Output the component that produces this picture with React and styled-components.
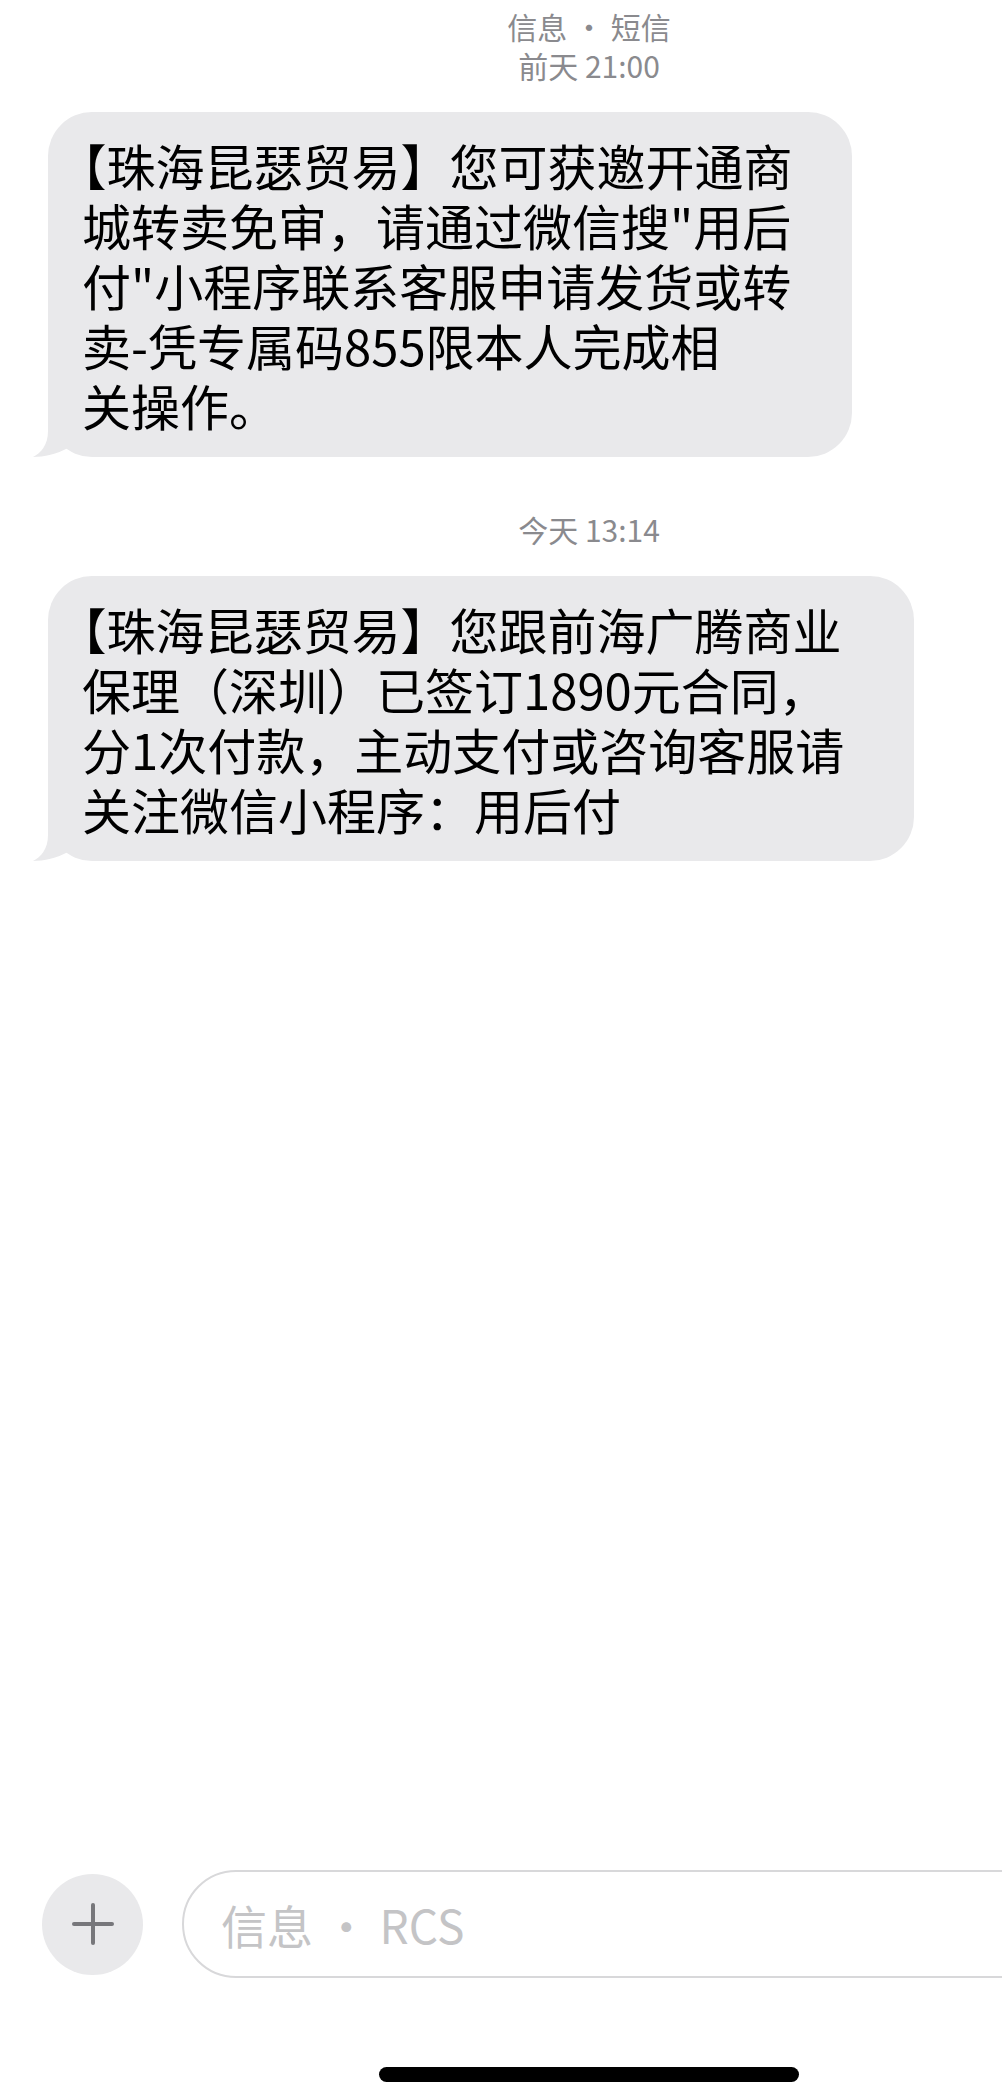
import React from 'react';
import styled, { createGlobalStyle } from 'styled-components';

const GlobalStyle = createGlobalStyle`
  html, body {
    margin: 0;
    padding: 0;
    background: #ffffff;
    overflow: hidden;
  }
  body {
    font-family: "Noto Sans CJK SC", "Noto Sans", sans-serif;
  }
`;

const Screen = styled.div`
  width: 1178px;
  height: 2099px;
  display: flex;
  flex-direction: column;
  background: #ffffff;
`;

const Thread = styled.div`
  flex: 1;
  display: flex;
  flex-direction: column;
  padding-top: 7px;
`;

const Stamp = styled.div`
  align-self: center;
  text-align: center;
  font-size: 30px;
  line-height: 39px;
  color: #8a8a8e;
  margin-top: ${(p) => p.$top || 0}px;
`;

const Bubble = styled.div`
  position: relative;
  isolation: isolate;
  align-self: flex-start;
  box-sizing: border-box;
  width: ${(p) => p.$width}px;
  margin: ${(p) => p.$top}px 0 0 48px;
  padding: 23px 0 22px 34px;
  background: #e9e9eb;
  border-radius: 44px;
  font-size: 49px;
  line-height: 60px;
  color: #000000;
  text-spacing-trim: trim-start;
`;

const Line = styled.span`
  display: block;
  white-space: nowrap;
`;

const Tail = styled.svg`
  position: absolute;
  z-index: -1;
  left: -16px;
  bottom: 0;
  width: 70px;
  height: 48px;
  display: block;
`;

const BubbleTail = () => (
  <Tail viewBox="0 0 70 48">
    <path
      d="M16 0 L16 22 C16 36 9 44 1 48 C12 48 25 45 36 39 C45 45 56 48 70 48 L70 0 Z"
      fill="#e9e9eb"
    />
  </Tail>
);

const Composer = styled.div`
  display: flex;
  align-items: center;
  gap: 39px;
  height: 108px;
  padding-left: 42px;
`;

const AddButton = styled.div`
  flex: none;
  width: 101px;
  height: 101px;
  border-radius: 50%;
  background: #e9e9eb;
  display: flex;
  align-items: center;
  justify-content: center;
`;

const Field = styled.div`
  flex: 1;
  box-sizing: border-box;
  height: 108px;
  margin-right: 20px;
  border: 2px solid #d8d8da;
  border-radius: 54px;
  padding-left: 37px;
  display: flex;
  align-items: center;
  font-size: 46px;
  color: #c4c4c6;
`;

const HomeArea = styled.div`
  height: 121px;
  display: flex;
  justify-content: center;
  align-items: flex-start;
  padding-top: 89px;
  box-sizing: border-box;
`;

const HomeIndicator = styled.div`
  width: 420px;
  height: 15px;
  border-radius: 8px;
  background: #000000;
`;

export default function App() {
  return (
    <>
      <GlobalStyle />
      <Screen>
        <Thread>
          <Stamp>
            信息 • 短信
            <br />
            前天 21:00
          </Stamp>
          <Bubble $top={27} $width={804}>
            <BubbleTail />
            <Line>【珠海昆瑟贸易】您可获邀开通商</Line>
            <Line>城转卖免审，请通过微信搜"用后</Line>
            <Line>付"小程序联系客服申请发货或转</Line>
            <Line>卖-凭专属码855限本人完成相</Line>
            <Line>关操作。</Line>
          </Bubble>
          <Stamp $top={53}>今天 13:14</Stamp>
          <Bubble $top={27} $width={866}>
            <BubbleTail />
            <Line>【珠海昆瑟贸易】您跟前海广腾商业</Line>
            <Line>保理（深圳）已签订1890元合同，</Line>
            <Line>分1次付款，主动支付或咨询客服请</Line>
            <Line>关注微信小程序：用后付</Line>
          </Bubble>
        </Thread>
        <Composer>
          <AddButton>
            <svg width="44" height="44" viewBox="0 0 44 44">
              <line x1="22" y1="3" x2="22" y2="41" stroke="#77777b" strokeWidth="4" strokeLinecap="round" />
              <line x1="3" y1="22" x2="41" y2="22" stroke="#77777b" strokeWidth="4" strokeLinecap="round" />
            </svg>
          </AddButton>
          <Field>信息 • RCS</Field>
        </Composer>
        <HomeArea>
          <HomeIndicator />
        </HomeArea>
      </Screen>
    </>
  );
}
